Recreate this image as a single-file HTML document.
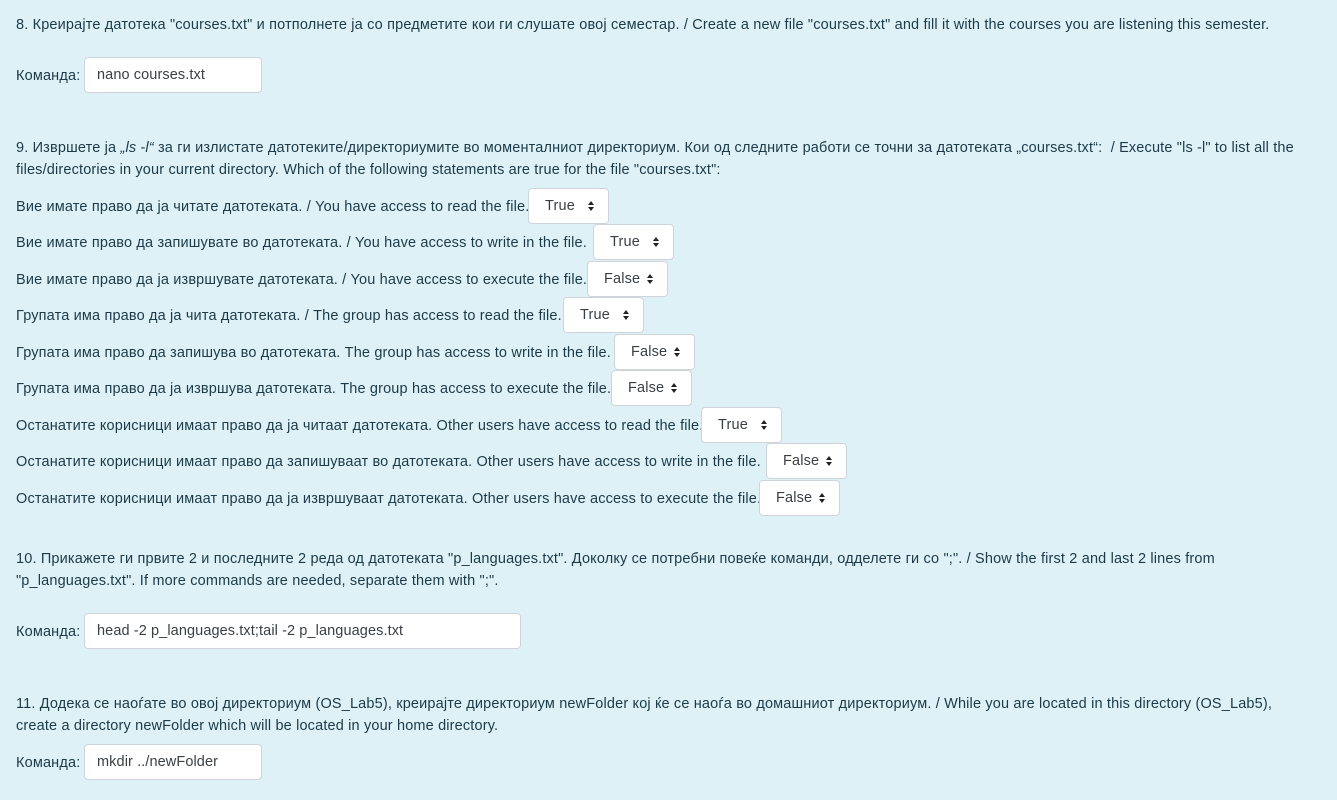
<!DOCTYPE html>
<html><head><meta charset="utf-8"><style>
body{margin:0;width:1337px;height:800px;background:#def1f7;font-family:"Liberation Sans",sans-serif;font-size:14.5px;letter-spacing:0.16px;color:#1c3a47;position:relative;overflow:hidden}
.t{position:absolute;left:16px;white-space:nowrap;line-height:22px;margin-top:1px}
.in{position:absolute;left:84px;background:#fff;border:1px solid #ced4da;border-radius:4px;box-sizing:border-box;height:36px;padding-left:12px;line-height:35px;color:#3a3f44;letter-spacing:0.1px}
.s{position:absolute;height:36px;width:81px;box-sizing:border-box;background:#fff;border:1px solid #ced4da;border-radius:4px;color:#3a3f44;line-height:35px;padding-left:16px}
.s:after{content:"";position:absolute;right:14px;top:12px;width:0;height:0;border-left:3.5px solid transparent;border-right:3.5px solid transparent;border-bottom:4px solid #222}
.s:before{content:"";position:absolute;right:14px;top:18px;width:0;height:0;border-left:3.5px solid transparent;border-right:3.5px solid transparent;border-top:4px solid #222}
</style></head><body>
<div class="t" style="top:13px">8. Креирајте датотека "courses.txt" и потполнете ја со предметите кои ги слушате овој семестар. / Create a new file "courses.txt" and fill it with the courses you are listening this semester.</div>
<div class="t" style="top:64px">Команда:</div><div class="in" style="top:57px;width:178px">nano courses.txt</div>

<div class="t" style="top:136px">9. Извршете ја <i>„ls -l“</i> за ги излистате датотеките/директориумите во моменталниот директориум. Кои од следните работи се точни за датотеката „courses.txt“:&nbsp; / Execute "ls -l" to list all the<br>files/directories in your current directory. Which of the following statements are true for the file "courses.txt":</div>

<div class="t" style="top:195px">Вие имате право да ја читате датотеката. / You have access to read the file.</div><div class="s" style="left:528px;top:188px">True</div>
<div class="t" style="top:231px">Вие имате право да запишувате во датотеката. / You have access to write in the file.</div><div class="s" style="left:593px;top:224px">True</div>
<div class="t" style="top:268px">Вие имате право да ја извршувате датотеката. / You have access to execute the file.</div><div class="s" style="left:587px;top:261px">False</div>
<div class="t" style="top:304px">Групата има право да ја чита датотеката. / The group has access to read the file.</div><div class="s" style="left:563px;top:297px">True</div>
<div class="t" style="top:341px">Групата има право да запишува во датотеката. The group has access to write in the file.</div><div class="s" style="left:614px;top:334px">False</div>
<div class="t" style="top:377px">Групата има право да ја извршува датотеката. The group has access to execute the file.</div><div class="s" style="left:611px;top:370px">False</div>
<div class="t" style="top:414px">Останатите корисници имаат право да ја читаат датотеката. Other users have access to read the file.</div><div class="s" style="left:701px;top:407px">True</div>
<div class="t" style="top:450px">Останатите корисници имаат право да запишуваат во датотеката. Other users have access to write in the file.</div><div class="s" style="left:766px;top:443px">False</div>
<div class="t" style="top:487px">Останатите корисници имаат право да ја извршуваат датотеката. Other users have access to execute the file.</div><div class="s" style="left:759px;top:480px">False</div>

<div class="t" style="top:547px">10. Прикажете ги првите 2 и последните 2 реда од датотеката "p_languages.txt". Доколку се потребни повеќе команди, одделете ги со ";". / Show the first 2 and last 2 lines from<br>"p_languages.txt". If more commands are needed, separate them with ";".</div>
<div class="t" style="top:620px">Команда:</div><div class="in" style="top:613px;width:437px">head -2 p_languages.txt;tail -2 p_languages.txt</div>

<div class="t" style="top:692px">11. Додека се наоѓате во овој директориум (OS_Lab5), креирајте директориум newFolder кој ќе се наоѓа во домашниот директориум. / While you are located in this directory (OS_Lab5),<br>create a directory newFolder which will be located in your home directory.</div>
<div class="t" style="top:751px">Команда:</div><div class="in" style="top:744px;width:178px">mkdir ../newFolder</div>
</body></html>
